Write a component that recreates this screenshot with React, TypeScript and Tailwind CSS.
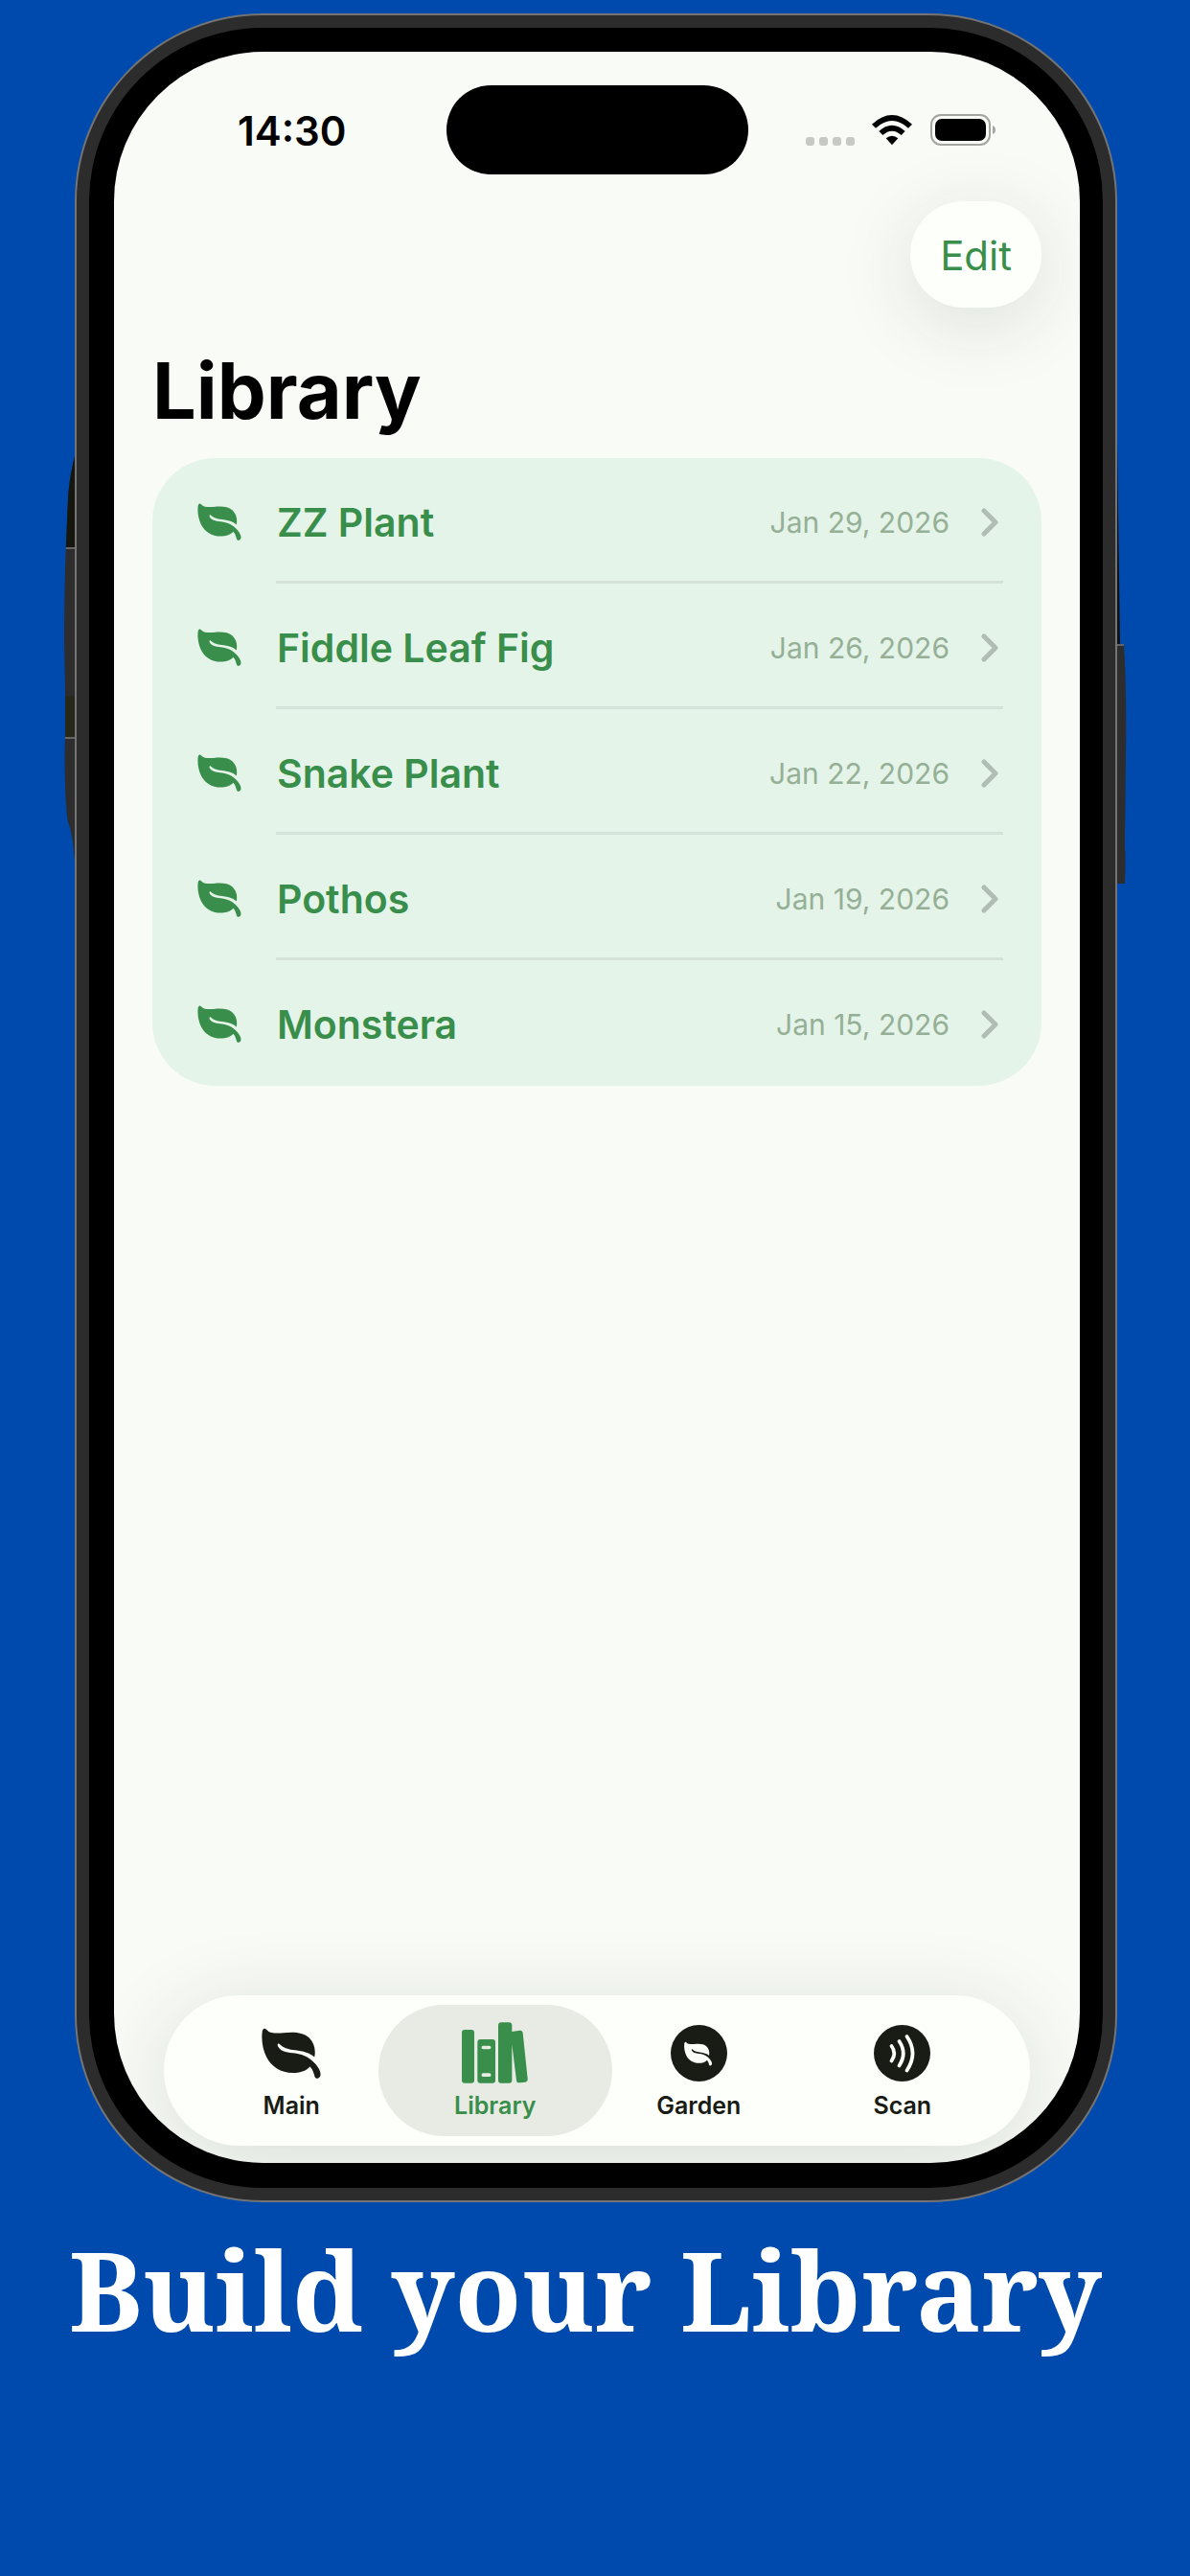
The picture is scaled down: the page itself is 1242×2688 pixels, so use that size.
import React from "react";

const LEAF =
  "M6 3C10 0 14 4 18 8C26 18 50 17 68 16C100 12 130 14 148 30C165 46 171 68 166 92C152 79 130 73 105 70C80 67 68 62 56 51C50 47 48 54 52 60C62 76 84 77 105 80C135 84 155 97 170 115C180 127 187 140 185 150C182 160 170 163 167 154C163 140 160 130 152 122C140 136 118 142 98 142C60 142 30 122 15 92C2 66-2 36 2 8Z";

function Leaf({ className }: { className: string }) {
  return (
    <svg viewBox="0 0 186 160" fill="currentColor" className={className} aria-hidden="true">
      <path d={LEAF} />
    </svg>
  );
}

function Books() {
  return (
    <svg viewBox="0 0 207 192" fill="currentColor" className="h-16 w-[69px]" aria-hidden="true">
      <rect x="0" y="24" width="39" height="167" rx="9" />
      <path
        fillRule="evenodd"
        d="M58 54H96Q105 54 105 63V182Q105 191 96 191H58Q49 191 49 182V63Q49 54 58 54ZM67 74A5 5 0 0 0 67 85H86A5 5 0 0 0 86 74ZM67 160A5 5 0 0 0 67 171H86A5 5 0 0 0 86 160Z"
      />
      <path d="M124 1H147Q157 1 157 10V30L181 26Q190 25 191 34L206 177Q207 187 198 188L181 190Q172 191 171 182L157 70V182Q157 191 148 191H123Q114 191 114 182V10Q114 1 124 1Z" />
    </svg>
  );
}

function GardenIcon() {
  return (
    <svg viewBox="0 0 59 59" className="h-[59px] w-[59px]" aria-hidden="true">
      <circle cx="29.500" cy="29.500" r="29.500" fill="currentColor" />
      <g transform="translate(14 17.500) scale(.157)">
        <path d={LEAF} fill="#fdfffa" />
      </g>
    </svg>
  );
}

function ScanIcon() {
  return (
    <svg viewBox="0 0 59 59" className="h-[59px] w-[59px]" aria-hidden="true">
      <circle cx="29.500" cy="29.500" r="29.500" fill="currentColor" />
      <g fill="none" stroke="#fdfffa" strokeWidth="3.800" strokeLinecap="round">
        <path d="M18.500 22Q24 29.500 18.500 37.500" />
        <path d="M26.500 17Q35 29.500 26.500 42.500" />
        <path d="M34.500 12Q46.500 29.500 34.500 47.500" />
      </g>
    </svg>
  );
}

function LeftKeys() {
  return (
    <svg viewBox="0 0 22 440" className="absolute top-[456px] -left-3 h-[440px] w-[22px]" aria-hidden="true">
      <clipPath id="left-keys">
        <path d="M12 6Q6 30 5 50L3 97Q1 140 1 200L2 252V296Q1 320 2 350Q3 378 5 388Q10 400 12 430H22V6Z" />
      </clipPath>
      <g clipPath="url(#left-keys)">
        <rect width="22" height="440" fill="#2d2d2d" />
        <rect width="22" height="101" fill="#15170f" />
        <rect y="101" width="22" height="2" fill="#666" />
        <rect y="256" width="22" height="43" fill="#27281a" />
        <rect y="299" width="22" height="2" fill="#666" />
      </g>
    </svg>
  );
}

function RightKey() {
  return (
    <svg viewBox="0 0 22 470" className="absolute top-[446px] -right-3 h-[470px] w-[22px]" aria-hidden="true">
      <path d="M0 0H10L13 212H0Z" fill="#121212" />
      <path d="M0 212H17Q20 260 19 330L18 420Q19 440 18 462H0Z" fill="#2d2d2d" />
      <path d="M0 213H17" stroke="#666" strokeWidth="2" />
    </svg>
  );
}

const plants = [
  { name: "ZZ Plant", date: "Jan 29, 2026" },
  { name: "Fiddle Leaf Fig", date: "Jan 26, 2026" },
  { name: "Snake Plant", date: "Jan 22, 2026" },
  { name: "Pothos", date: "Jan 19, 2026" },
  { name: "Monstera", date: "Jan 15, 2026" },
];

function StatusBar() {
  return (
    <div className="grid h-32 grid-cols-[1fr_315px_1fr] items-end">
      <time className="mb-5 pl-[129px] text-[42px] leading-[50px] font-semibold text-black">14:30</time>
      <div className="h-[93px] rounded-full bg-black" />
      <div className="mb-[27px] flex items-end justify-end pr-[87px]">
        <div className="mb-[3px] flex gap-[5px]">
          {[0, 1, 2, 3].map((i) => (
            <span key={i} className="h-[9px] w-[9px] rounded-[3px] bg-[#c7c9c4]" />
          ))}
        </div>
        <svg viewBox="0 0 126 96" className="mb-[3px] ml-[18px] h-8 w-[42px]" aria-hidden="true">
          <path d="M0 29Q63-29 126 29L114 41Q63-5 12 41Z" />
          <path d="M22 51Q63 13 104 51L92 63Q63 37 34 63Z" />
          <path d="M44 73Q63 57 82 73L63 94Z" />
        </svg>
        <svg viewBox="0 0 69 33" className="mb-[3px] ml-[19px] h-[33px] w-[69px]" aria-hidden="true">
          <rect x="1" y="1" width="61" height="31" rx="10" fill="none" stroke="#a3a5a1" strokeWidth="2" />
          <rect x="5" y="5" width="53" height="23" rx="7" />
          <path d="M65 12Q68 13 68 16.500T65 21Z" fill="#a3a5a1" />
        </svg>
      </div>
    </div>
  );
}

function PlantRow({ name, date, last }: { name: string; date: string; last: boolean }) {
  return (
    <li>
      <a href="#plant" className="flex h-[131px] items-center pl-[47px] text-[#388e4a]">
        <Leaf className="mt-0.5 h-[39px] w-[46px]" />
        <span
          className={
            "mr-10 ml-9 flex h-full flex-1 items-center border-b-3 pt-1.5 " +
            (last ? "border-transparent" : "border-[#d5e2d9]")
          }
        >
          <span className="flex-1 pl-px text-[41px] leading-[50px] font-semibold">{name}</span>
          <span className="text-[30px] leading-10 text-[#95b096]">{date}</span>
          <svg viewBox="0 0 18 30" className="mr-[5px] ml-[33px] h-[30px] w-[18px]" aria-hidden="true">
            <path d="M3 3L15 15L3 27" fill="none" stroke="#b0bdb5" strokeWidth="5" strokeLinecap="round" strokeLinejoin="round" />
          </svg>
        </span>
      </a>
    </li>
  );
}

function Tab({ label, icon, active = false }: { label: string; icon: React.ReactNode; active?: boolean }) {
  return (
    <button
      type="button"
      aria-current={active ? "page" : undefined}
      className={"relative flex flex-1 flex-col items-center " + (active ? "text-[#388e4a]" : "text-[#191b15]")}
    >
      {active && <span className="absolute inset-y-0 -right-4 -left-4 rounded-full bg-[#e8ebe4]" />}
      <span className="relative mt-[18px] flex h-16 items-center">{icon}</span>
      <span className="relative mt-[7px] text-[25px] leading-8 font-semibold">{label}</span>
    </button>
  );
}

export default function App() {
  return (
    <div className="flex min-h-screen flex-col bg-[#004aad] pt-3.5 font-['Inter',sans-serif]">
      <div className="relative mr-[76px] ml-[78px]">
        <LeftKeys />
        <RightKey />
        <div className="relative rounded-[196px] bg-[#747474] p-0.5">
          <div className="rounded-[194px] bg-[#2c2c2c] p-[13px]">
            <div className="rounded-[181px] bg-black pt-[25px] pr-6 pb-[26px] pl-[26px]">
              <div className="flex min-h-[2203px] flex-col overflow-hidden rounded-[156px] bg-[#f9fbf6]">
                <StatusBar />
                <header className="flex flex-col px-10">
                  <button
                    type="button"
                    className="mt-7 self-end rounded-full bg-[#fdfffa] px-[31px] pt-[31px] pb-[29px] text-[42px] leading-[51px] text-[#388e4a] shadow-[0_16px_80px_rgba(20,50,40,0.13)]"
                  >
                    Edit
                  </button>
                  <h1 className="mt-[37px] text-[81px] leading-[100px] font-bold text-black">Library</h1>
                </header>
                <ul className="mx-10 mt-5 overflow-hidden rounded-[66px] bg-[#e5f4e9]">
                  {plants.map((p, i) => (
                    <PlantRow key={p.name} name={p.name} date={p.date} last={i === plants.length - 1} />
                  ))}
                </ul>
                <nav className="mx-[52px] mt-auto mb-[18px] flex h-[157px] rounded-full bg-[#fdfffa] px-[27px] py-[10px] shadow-[0_16px_90px_rgba(20,50,40,0.14)]">
                  <Tab label="Main" icon={<Leaf className="h-[53px] w-[62px]" />} />
                  <Tab label="Library" icon={<Books />} active />
                  <Tab label="Garden" icon={<GardenIcon />} />
                  <Tab label="Scan" icon={<ScanIcon />} />
                </nav>
              </div>
            </div>
          </div>
        </div>
      </div>
      <h2 className="mt-3.5 pr-5 text-center font-['Noto_Serif','DejaVu_Serif',serif] text-[114px] leading-[154px] font-bold whitespace-nowrap text-white">
        Build your Library
      </h2>
    </div>
  );
}
